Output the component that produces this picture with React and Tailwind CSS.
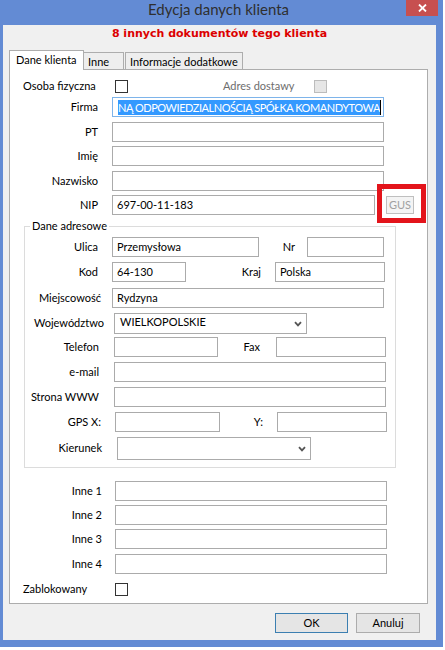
import React from "react";

function Check({ disabled = false }) {
  return (
    <div
      className={
        disabled
          ? "w-[13px] h-[13px] border border-[#bcbcbc] bg-[#e6e6e6] shrink-0"
          : "w-[13px] h-[13px] border border-[#333333] bg-white shrink-0"
      }
    />
  );
}

function Input({ className = "", children }) {
  return (
    <div
      className={
        "h-[20px] border border-[#ababab] bg-white flex items-center pl-[4px] leading-[14px] overflow-hidden whitespace-nowrap shrink-0 " +
        className
      }
    >
      {children}
    </div>
  );
}

function Chevron() {
  return (
    <svg width="8" height="6" viewBox="0 0 8 6" className="shrink-0">
      <path d="M1 1.2 L4 4.4 L7 1.2" fill="none" stroke="#555555" strokeWidth="1.8" />
    </svg>
  );
}

function Select({ className = "", children }) {
  return (
    <div
      className={
        "border border-[#ababab] bg-white flex items-center justify-between pl-[5px] pr-[4px] leading-[14px] shrink-0 " +
        className
      }
    >
      <span className="mb-[4px]">{children}</span>
      <Chevron />
    </div>
  );
}

export default function App() {
  return (
    <div className="w-[445px] h-[650px] bg-white relative overflow-hidden font-['Lato',sans-serif] text-[11px] text-black">
      <div className="w-[443px] h-[647px] bg-[#638bd4] flex flex-col">
        {/* title bar */}
        <div className="h-[25px] flex shrink-0">
          <div className="w-[406px] pl-[31px] text-center text-[15px] leading-[18px] text-[#2f2f2f]">
            Edycja danych klienta
          </div>
          <div className="w-[32px] h-[16px] bg-[#c75050] flex items-center justify-center">
            <svg width="9" height="8" viewBox="0 0 9 8">
              <path d="M1 0.5 L8 7.5 M8 0.5 L1 7.5" stroke="#ffffff" strokeWidth="1.8" />
            </svg>
          </div>
        </div>

        {/* client area */}
        <div className="w-[433px] h-[615px] ml-[3px] bg-[#f0f0f0] flex flex-col">
          <div className="h-[25px] pt-[2px] text-center leading-[14px] font-['DejaVu_Sans',sans-serif] font-bold text-[11px] text-[#dc0000]">
            8 innych dokumentów tego klienta
          </div>

          {/* tabs */}
          <div className="h-[19px] flex items-end pl-[6px]">
            <div className="w-[75px] h-[20px] mb-[-1px] relative z-10 bg-white border-l border-t border-r border-[#adadad] pl-[6px] leading-[18px]">
              Dane klienta
            </div>
            <div className="w-[40px] h-[17px] bg-[#eeeeee] border-t border-r border-[#adadad] pl-[4px] leading-[17px]">
              Inne
            </div>
            <div className="w-[118px] h-[17px] ml-[1px] bg-[#eeeeee] border-l border-t border-r border-[#adadad] pl-[4px] leading-[17px]">
              Informacje dodatkowe
            </div>
          </div>

          {/* panel */}
          <div className="w-[419px] h-[535px] ml-[6px] border border-[#adadad] bg-white flex flex-col">
            <div className="mt-[6px] h-[20px] flex items-center">
              <span className="ml-[13px] w-[92px]">Osoba fizyczna</span>
              <Check />
              <span className="ml-[95px] w-[91px] text-[#6d6d6d]">Adres dostawy</span>
              <Check disabled />
            </div>

            <div className="mt-[1px] h-[20px] flex items-center">
              <span className="w-[88px] text-right">Firma</span>
              <div className="ml-[14px] w-[272px] h-[20px] border border-[#7eb4ea] bg-white flex items-center pl-[5px] whitespace-nowrap overflow-hidden">
                <span className="bg-[#3399ff] text-white leading-[15px] tracking-[-0.45px]">NĄ ODPOWIEDZIALNOŚCIĄ SPÓŁKA KOMANDYTOWA</span>
                <span className="w-[1px] h-[15px] bg-black shrink-0" />
              </div>
            </div>

            <div className="mt-[5px] h-[20px] flex items-center">
              <span className="w-[88px] text-right">PT</span>
              <Input className="ml-[14px] w-[272px]" />
            </div>
            <div className="mt-[4px] h-[20px] flex items-center">
              <span className="w-[88px] text-right">Imię</span>
              <Input className="ml-[14px] w-[272px]" />
            </div>
            <div className="mt-[5px] h-[20px] flex items-center">
              <span className="w-[88px] text-right">Nazwisko</span>
              <Input className="ml-[14px] w-[272px]" />
            </div>
            <div className="mt-[4px] h-[20px] flex items-center">
              <span className="w-[88px] text-right">NIP</span>
              <Input className="ml-[14px] w-[263px]">697-00-11-183</Input>
              <div className="ml-[11px] w-[28px] h-[18px] border border-[#bfbfbf] bg-[#f4f4f4] text-[#a0a0a0] flex items-center justify-center leading-[14px]">
                GUS
              </div>
            </div>

            <fieldset className="mt-[4px] ml-[14px] w-[372px] border border-[#dcdcdc] pb-[7px] flex flex-col">
              <legend className="ml-[5px] px-[2px] leading-[14px]">Dane adresowe</legend>

              <div className="mt-[4px] h-[20px] flex items-center">
                <span className="w-[73px] text-right">Ulica</span>
                <Input className="ml-[14px] w-[147px]">Przemysłowa</Input>
                <span className="w-[36px] text-right">Nr</span>
                <Input className="ml-[12px] w-[77px]" />
              </div>
              <div className="mt-[5px] h-[20px] flex items-center">
                <span className="w-[73px] text-right">Kod</span>
                <Input className="ml-[14px] w-[74px]">64-130</Input>
                <span className="w-[75px] text-right">Kraj</span>
                <Input className="ml-[14px] w-[110px]">Polska</Input>
              </div>
              <div className="mt-[6px] h-[20px] flex items-center">
                <span className="w-[76px] text-right">Miejscowość</span>
                <Input className="ml-[11px] w-[272px]">Rydzyna</Input>
              </div>
              <div className="mt-[5px] h-[21px] flex items-center">
                <span className="w-[79px] text-right">Województwo</span>
                <Select className="ml-[10px] w-[193px] h-[21px]">WIELKOPOLSKIE</Select>
              </div>
              <div className="mt-[3px] h-[20px] flex items-center">
                <span className="w-[74px] text-right">Telefon</span>
                <Input className="ml-[15px] w-[104px]" />
                <span className="w-[42px] text-right">Fax</span>
                <Input className="ml-[16px] w-[110px]" />
              </div>
              <div className="mt-[5px] h-[20px] flex items-center">
                <span className="w-[74px] text-right">e-mail</span>
                <Input className="ml-[15px] w-[272px]" />
              </div>
              <div className="mt-[5px] h-[20px] flex items-center">
                <span className="w-[74px] text-right">Strona WWW</span>
                <Input className="ml-[15px] w-[272px]" />
              </div>
              <div className="mt-[5px] h-[20px] flex items-center">
                <span className="w-[76px] text-right">GPS X:</span>
                <Input className="ml-[14px] w-[105px]" />
                <span className="w-[43px] text-right">Y:</span>
                <Input className="ml-[14px] w-[110px]" />
              </div>
              <div className="mt-[5px] h-[23px] flex items-center">
                <span className="w-[77px] text-right">Kierunek</span>
                <Select className="ml-[15px] w-[194px] h-[23px]">{""}</Select>
              </div>
            </fieldset>

            <div className="mt-[13px] h-[20px] flex items-center">
              <span className="w-[92px] text-right">Inne 1</span>
              <Input className="ml-[13px] w-[272px]" />
            </div>
            <div className="mt-[4px] h-[20px] flex items-center">
              <span className="w-[92px] text-right">Inne 2</span>
              <Input className="ml-[13px] w-[272px]" />
            </div>
            <div className="mt-[4px] h-[20px] flex items-center">
              <span className="w-[92px] text-right">Inne 3</span>
              <Input className="ml-[13px] w-[272px]" />
            </div>
            <div className="mt-[5px] h-[20px] flex items-center">
              <span className="w-[92px] text-right">Inne 4</span>
              <Input className="ml-[13px] w-[272px]" />
            </div>
            <div className="mt-[5px] h-[20px] flex items-center">
              <span className="ml-[13px] w-[92px]">Zablokowany</span>
              <Check />
            </div>
          </div>

          {/* buttons */}
          <div className="mt-[9px] h-[20px] flex justify-end pr-[16px]">
            <div className="w-[73px] h-[20px] border border-[#3c7fb1] bg-[#e5e5e5] flex items-center justify-center leading-[14px]">
              OK
            </div>
            <div className="ml-[8px] w-[64px] h-[20px] border border-[#acacac] bg-[#e5e5e5] flex items-center justify-center leading-[14px]">
              Anuluj
            </div>
          </div>
        </div>
      </div>

      {/* annotation frame */}
      <div className="absolute left-[377px] top-[184px] w-[49px] h-[39px] border-[5px] border-[#e3141b]" />
    </div>
  );
}
